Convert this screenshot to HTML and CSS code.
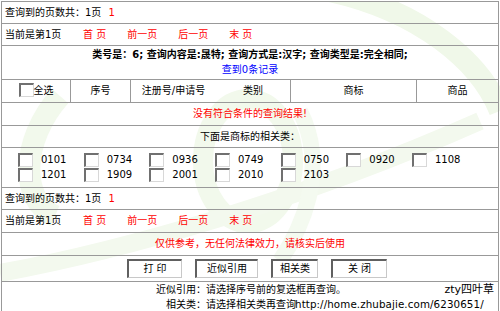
FILE: index.html
```html
<!DOCTYPE html>
<html lang="zh-CN">
<head>
<meta charset="utf-8">
<title>查询结果</title>
<link rel="stylesheet" href="styles.css">
</head>
<body>
<div class="page">
  <svg class="wm" width="500" height="311" viewBox="0 0 500 311" aria-hidden="true">
    <path d="M330 -10 C 420 10, 480 60, 500 110" fill="none" stroke="#f0f8e9" stroke-width="22"/>
    <path d="M60 95 C 20 140, 20 200, 55 215" fill="none" stroke="#f2f9ec" stroke-width="22"/>
    <ellipse cx="248" cy="160" rx="45" ry="62" fill="none" stroke="#f2f9ec" stroke-width="20"/>
    <path d="M0 272 C 120 250, 300 200, 480 120" fill="none" stroke="#f3f9ee" stroke-width="18"/>
    <path d="M300 110 C 330 170, 300 230, 280 260" fill="none" stroke="#f4faf0" stroke-width="16"/>
  </svg>
  <div class="frame">
    <div class="row r-total"><span>查询到的页数共：1页</span><span class="red pgnum">1</span></div>
    <div class="row r-nav">
      <span class="cur">当前是第1页</span>
      <span class="red lk">首 页</span>
      <span class="red lk">前一页</span>
      <span class="red lk">后一页</span>
      <span class="red lk">末 页</span>
    </div>
    <div class="row r-info">
      <div class="bold">类号是：6; 查询内容是:晟特; 查询方式是:汉字; 查询类型是:完全相同;</div>
      <div class="blue">查到0条记录</div>
    </div>
    <div class="row r-head">
      <div class="th c1"><span class="cb"></span>全选</div>
      <div class="th c2">序号</div>
      <div class="th c3">注册号/申请号</div>
      <div class="th c4">类别</div>
      <div class="th c5">商标</div>
      <div class="th c6">商品</div>
    </div>
    <div class="row r-center red r-none">没有符合条件的查询结果!</div>
    <div class="row r-center r-sub">下面是商标的相关类：</div>
    <div class="row r-grid">
      <div class="grid">
        <div class="it"><span class="cb"></span>0101</div>
        <div class="it"><span class="cb"></span>0734</div>
        <div class="it"><span class="cb"></span>0936</div>
        <div class="it"><span class="cb"></span>0749</div>
        <div class="it"><span class="cb"></span>0750</div>
        <div class="it"><span class="cb"></span>0920</div>
        <div class="it"><span class="cb"></span>1108</div>
        <div class="it"><span class="cb"></span>1201</div>
        <div class="it"><span class="cb"></span>1909</div>
        <div class="it"><span class="cb"></span>2001</div>
        <div class="it"><span class="cb"></span>2010</div>
        <div class="it"><span class="cb"></span>2103</div>
      </div>
    </div>
    <div class="row r-total"><span>查询到的页数共：1页</span><span class="red pgnum">1</span></div>
    <div class="row r-nav r-nav2">
      <span class="cur">当前是第1页</span>
      <span class="red lk">首 页</span>
      <span class="red lk">前一页</span>
      <span class="red lk">后一页</span>
      <span class="red lk">末 页</span>
    </div>
    <div class="row r-center red r-note">仅供参考，无任何法律效力，请核实后使用</div>
    <div class="row r-btns">
      <span class="btn b1">打 印</span>
      <span class="btn b2">近似引用</span>
      <span class="btn b3">相关类</span>
      <span class="btn b4">关 闭</span>
    </div>
    <div class="r-foot">
      <div class="fl">近似引用：</div><div class="fv">请选择序号前的复选框再查询。<span class="sig">zty四叶草</span></div>
      <div class="fl">相关类：</div><div class="fv">请选择相关类再查询<span class="url">http://home.zhubajie.com/6230651/</span></div>
    </div>
  </div>
</div>
</body>
</html>
```

FILE: styles.css
```css
* { box-sizing: border-box; }
html, body { margin: 0; padding: 0; background: #fff; }
body {
  font-family: "DejaVu Sans", "Noto Sans CJK SC", sans-serif;
  font-size: 10px;
  color: #000;
  width: 500px;
  height: 311px;
  overflow: hidden;
}
.page { position: relative; width: 500px; height: 311px; }
.wm { position: absolute; left: 0; top: 0; z-index: 0; }
.frame {
  position: relative;
  z-index: 1;
  margin: 1px 1px 0 1px;
  border: 1px solid #999;
  border-bottom: none;
  height: 310px;
}
.row {
  display: flex;
  align-items: center;
  border-bottom: 1px solid #999;
  height: 22px;
  padding-left: 3px;
  line-height: 12px;
}
.red { color: #ff0000; }
.blue { color: #0000ff; }
.pgnum { margin-left: 7px; }
.r-nav { height: 22px; }
.r-nav2 { height: 23px; }
.cur { width: 57px; }
.lk { margin-left: 21px; }
.r-info {
  height: 34px;
  flex-direction: column;
  justify-content: center;
  gap: 3px;
  padding-left: 0;
}
.bold { font-weight: bold; }
.r-head { height: 23px; padding-left: 0; align-items: stretch; }
.th {
  display: flex;
  align-items: center;
  justify-content: center;
  border-right: 1px solid #999;
}
.c1 { width: 69px; }
.c2 { width: 60px; }
.c3 { width: 85px; border-right: none; }
.c4 { width: 75px; }
.c5 { width: 126px; }
.c6 { flex: 1; border-right: none; }
.c1 .cb { margin-right: 0; margin-top: -2px; }
.r-center { justify-content: center; padding-left: 0; height: 23px; }
.r-sub { height: 22px; }
.r-grid { height: 40px; align-items: flex-start; padding: 4px 0 0 16px; }
.grid {
  display: grid;
  grid-template-columns: repeat(7, 65.67px);
  grid-auto-rows: 15.5px;
}
.it { display: flex; align-items: center; }
.cb {
  display: inline-block;
  width: 15px;
  height: 14px;
  background: #fff;
  border-style: solid;
  border-width: 2px 1px 1px 2px;
  border-color: #707070 #d8d8d8 #d8d8d8 #707070;
  margin-right: 8px;
  flex: none;
}
.r-btns { height: 26px; padding-left: 125px; gap: 13px; }
.btn {
  display: flex;
  align-items: center;
  justify-content: center;
  height: 19px;
  background: #fff;
  border-style: solid;
  border-width: 2px 1px 1px 2px;
  border-color: #606060 #c8c8c8 #c8c8c8 #606060;
}
.b1 { width: 55px; }
.b2 { width: 63px; }
.b3 { width: 47px; }
.b4 { width: 56px; }
.r-foot {
  display: grid;
  grid-template-columns: 204px 1fr;
  grid-auto-rows: 15px;
  padding-top: 0;
  line-height: 13px;
  align-items: center;
}
.fl { text-align: right; }
.fv { position: relative; white-space: nowrap; }
.sig { position: absolute; right: 4px; top: 0; font-size: 11px; line-height: 13px; }
.url { font-size: 10.3px; letter-spacing: 0.1px; margin-left: -1px; }
```
